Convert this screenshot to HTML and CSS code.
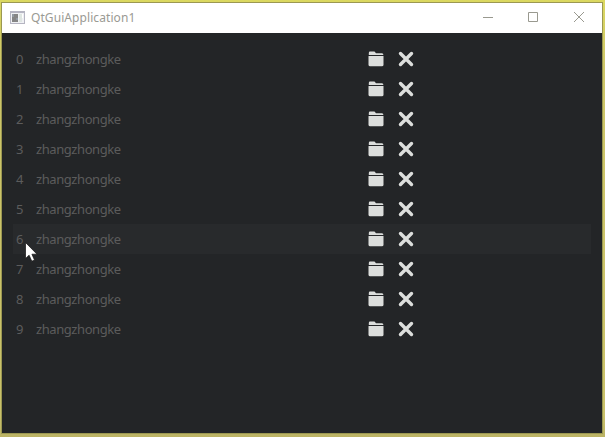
FILE: index.html
```html
<!DOCTYPE html>
<html lang="en">
<head>
<meta charset="utf-8">
<title>QtGuiApplication1</title>
<link rel="stylesheet" href="styles.css">
</head>
<body>
<svg class="symbols" width="0" height="0">
  <symbol id="folder" viewBox="0 0 16 16">
    <path d="M.8 4V2Q.8 .6 2 .6H6.5L8 2.2H14Q15.4 2.2 15.4 4Z"/>
    <path d="M.5 5H15.5V13.8Q15.5 15.3 13.8 15.3H2.2Q.5 15.3 .5 13.8Z"/>
  </symbol>
  <symbol id="cross" viewBox="0 0 16 16">
    <path d="M2.5 2.5 13.5 13.5M13.5 2.5 2.5 13.5" fill="none" stroke="currentColor" stroke-width="3.4" stroke-linecap="round"/>
  </symbol>
</svg>
<main class="window">
  <header class="titlebar">
    <svg class="app-icon" width="15" height="13" viewBox="0 0 15 13" shape-rendering="crispEdges">
      <path fill="#b5b5c2" d="M0 0H15V13H0Z"/>
      <path fill="#f0f1f4" d="M1 2H14V12H1Z"/>
      <path fill="#858585" d="M2 3H8V11H2Z"/>
      <path fill="#9299a2" d="M2 3H4V6H2ZM6 7H8V9H6Z"/>
      <path fill="#dfe6e2" d="M9 3H12V11H9Z"/>
      <path fill="#fff" d="M12 3H13V7H12Z"/>
    </svg>
    <h1 class="title">QtGuiApplication1</h1>
    <div class="controls">
      <svg width="46" height="30" viewBox="0 0 46 30"><path d="M18 14.5H28"/></svg>
      <svg width="46" height="30" viewBox="0 0 46 30"><path d="M17.5 9.5H26.5V18.5H17.5Z"/></svg>
      <svg width="46" height="30" viewBox="0 0 46 30"><path d="M17 9 27 19M27 9 17 19"/></svg>
    </div>
  </header>
  <ul class="list" id="list"></ul>
</main>
<svg class="cursor" width="13" height="20" viewBox="0 0 13 20">
  <path d="M.5 .5V16.5L4.1 13.2 6.8 19.2 9.5 18 6.9 12.2H12Z" fill="#fff" stroke="#111" stroke-width=".7"/>
</svg>
<script src="script.js"></script>
</body>
</html>
```
FILE: styles.css
```css
* { box-sizing: border-box; }
body {
  margin: 0;
  width: 605px;
  height: 437px;
  padding: 2px 2px 3px 1px;
  overflow: hidden;
  background: linear-gradient(#dbd860, #cdc668 15%, #c9c16a 95%, #bbb365);
  font-family: "Noto Sans", sans-serif;
}
.symbols { position: absolute; }
.window {
  width: 602px;
  height: 432px;
  border: 1px solid #9b9852;
  background: #232527;
}
.titlebar {
  display: flex;
  align-items: center;
  height: 30px;
  padding-left: 8px;
  background: #fff;
}
.app-icon { margin-top: -2px; }
.title {
  margin: 0 0 0 6px;
  font-size: 12px;
  font-weight: 400;
  line-height: 30px;
  letter-spacing: 0.08px;
  color: #9a9a93;
}
.controls {
  display: flex;
  margin-left: auto;
  margin-right: -1px;
}
.controls path {
  fill: none;
  stroke: #99998f;
  stroke-width: 1;
}
.list {
  margin: 11px 11px 0 11px;
  padding: 0;
  list-style: none;
}
.row {
  display: grid;
  grid-template-columns: 20px 332px 30px 16px;
  align-items: center;
  height: 30px;
  padding-left: 3px;
  font-size: 13px;
  line-height: 30px;
  letter-spacing: -0.42px;
  color: #5c5c5c;
}
.row.hovered { background: #282a2c; }
.row svg {
  fill: #dcdedc;
  color: #dcdedc;
}
.cursor {
  position: absolute;
  left: 25px;
  top: 242px;
}
```
FILE: script.js
```javascript
const list = document.getElementById("list");
const hovered = 6;
for (let i = 0; i < 10; i++) {
  const row = document.createElement("li");
  row.className = i === hovered ? "row hovered" : "row";
  row.innerHTML = `<span>${i}</span><span>zhangzhongke</span>
    <svg width="16" height="16"><use href="#folder"/></svg>
    <svg width="16" height="16"><use href="#cross"/></svg>`;
  list.append(row);
}
```
